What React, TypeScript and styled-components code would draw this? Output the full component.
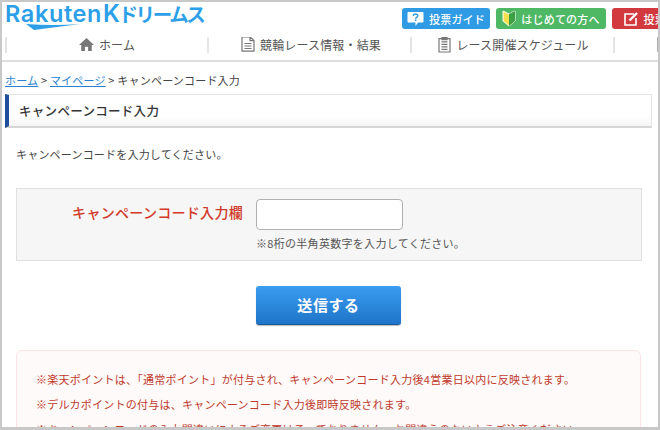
import React from "react";
import styled, { createGlobalStyle } from "styled-components";

const jp = `"Noto Sans CJK JP", "Liberation Sans", sans-serif`;

const Global = createGlobalStyle`
  html, body { margin: 0; padding: 0; background: #fff; overflow: hidden; }
  body { font-family: ${jp}; color: #333; }
`;

const Frame = styled.div`
  width: 660px;
  height: 430px;
  box-sizing: border-box;
  border-top: 2px solid #c8c8c8;
  border-left: 2px solid #c8c8c8;
  border-right: 2px solid #c8c8c8;
  border-bottom: 3px solid #c8c8c8;
  overflow: hidden;
  position: relative;
`;

const Header = styled.header`
  height: 58px;
  border-bottom: 2px solid #dedede;
  display: flex;
  flex-direction: column;
`;

const TopRow = styled.div`
  height: 35px;
  display: flex;
  padding-left: 3px;
`;

const Logo = styled.div`
  position: relative;
  flex: 0 0 397px;
  height: 27px;
  color: #2d9fe8;
  display: flex;
  align-items: baseline;
  white-space: nowrap;
`;

const LogoWord = styled.span`
  font-family: "Inter", "Liberation Sans", sans-serif;
  font-size: 23.5px;
  font-weight: 600;
  letter-spacing: 0.6px;
  line-height: 24px;
`;

const LogoKana = styled.span`
  font-size: 19.5px;
  font-weight: 700;
  letter-spacing: -2.4px;
  line-height: 24px;
`;

const LogoK = styled(LogoWord)`
  margin-left: 1px;
  margin-right: -2px;
  font-size: 24px;
`;

const LogoSwoosh = styled.svg`
  position: absolute;
  left: 21px;
  top: 22px;
`;

const Actions = styled.div`
  display: flex;
  gap: 6px;
  margin-top: 6px;
  height: 21px;
`;

const Action = styled.div<{ $bg: string; $w: number }>`
  flex: 0 0 ${(p) => p.$w}px;
  height: 21px;
  box-sizing: border-box;
  background: ${(p) => p.$bg};
  border-radius: 3px;
  color: #fff;
  font-size: 11px;
  font-weight: 500;
  letter-spacing: 0.2px;
  display: flex;
  align-items: center;
  justify-content: center;
  gap: 5px;
  white-space: nowrap;
`;

const Nav = styled.nav`
  display: flex;
  height: 16px;
  margin-left: 3px;
  overflow: hidden;
`;

const NavItem = styled.div<{ $w: number; $shift?: number }>`
  flex: 0 0 ${(p) => p.$w}px;
  box-sizing: border-box;
  border-left: 2px solid #e4e4e4;
  padding-left: ${(p) => p.$shift ?? 0}px;
  padding-bottom: 2px;
  display: flex;
  align-items: center;
  justify-content: center;
  gap: 5px;
  font-size: 12px;
  color: #555;
  letter-spacing: 0.15px;
  white-space: nowrap;
`;

const Main = styled.main`
  padding: 0 0 0 3px;
  width: 647px;
`;

const Crumbs = styled.div`
  margin-top: 10px;
  font-size: 11px;
  line-height: 16px;
  color: #444;
  white-space: nowrap;
  letter-spacing: 0.2px;
`;

const CrumbLink = styled.a`
  color: #2a7fd0;
  text-decoration: underline;
`;

const Title = styled.h1`
  margin: 6px 0 0;
  height: 34px;
  box-sizing: border-box;
  border-top: 1px solid #e4e4e4;
  border-right: 1px solid #e4e4e4;
  border-bottom: 2px solid #d6d6d6;
  border-left: 4px solid #1f4e9c;
  background: linear-gradient(#fff 70%, #f4f4f4);
  padding-left: 10px;
  font-size: 12.5px;
  font-weight: 500;
  line-height: 31px;
  color: #333;
  letter-spacing: 0.3px;
`;

const Lead = styled.p`
  margin: 18px 0 0 11px;
  font-size: 11px;
  line-height: 16px;
  color: #444;
  letter-spacing: 0.2px;
`;

const FormPanel = styled.section`
  margin: 26px 0 0 11px;
  width: 626px;
  height: 73px;
  box-sizing: border-box;
  background: #f6f6f6;
  border: 1px solid #e0e0e0;
  display: grid;
  grid-template-columns: 226px 1fr;
  column-gap: 13px;
  padding-top: 10px;
`;

const FieldLabel = styled.label`
  text-align: right;
  color: #d2392b;
  font-size: 14px;
  font-weight: 500;
  line-height: 26px;
  letter-spacing: 0.3px;
  white-space: nowrap;
`;

const FieldBox = styled.div`
  display: flex;
  flex-direction: column;
`;

const CodeInput = styled.input`
  width: 147px;
  height: 31px;
  box-sizing: border-box;
  border: 1px solid #b0b0b0;
  border-radius: 4px;
  background: #fff;
  outline: none;
`;

const Hint = styled.div`
  margin-top: 5px;
  font-size: 11px;
  line-height: 16px;
  color: #555;
  letter-spacing: 0.3px;
  white-space: nowrap;
`;

const SubmitRow = styled.div`
  margin-top: 25px;
  padding-left: 251px;
`;

const Submit = styled.button`
  width: 145px;
  height: 39px;
  border: 0;
  border-radius: 3px;
  border-bottom: 1px solid #155a9c;
  background: linear-gradient(#3a9df0, #1f74c8);
  box-shadow: 0 1px 1px #bbb;
  color: #fff;
  font-family: ${jp};
  font-size: 15px;
  font-weight: 700;
  letter-spacing: 0.6px;
  padding: 0 0 2px;
`;

const Notice = styled.section`
  margin: 25px 0 0 11px;
  width: 625px;
  height: 120px;
  box-sizing: border-box;
  background: #fffafa;
  border: 1px solid #fbe4e6;
  border-radius: 6px;
  padding: 19px 0 0 19px;
  color: #c0392b;
  font-size: 11px;
  letter-spacing: 0.25px;
  white-space: nowrap;
`;

const NoticeLine = styled.p`
  margin: 0 0 7px;
  line-height: 18px;
`;

const NavIcon = styled.svg`
  flex: none;
`;

const HomeIcon = () => (
  <NavIcon width="15" height="15" viewBox="0 0 16 16" fill="#777">
    <path d="M8 1 L16 8.5 H13.6 V15 H9.7 V10.5 H6.3 V15 H2.4 V8.5 H0 Z" />
  </NavIcon>
);

const DocIcon = () => (
  <NavIcon width="14" height="16" viewBox="0 0 14 16" fill="none" stroke="#777" strokeWidth="1.2">
    <path d="M1 .8 H9 L13 4.6 V15.2 H1 Z M9 .8 V4.6 H13 M3.5 7.5 H10.5 M3.5 10 H10.5 M3.5 12.5 H10.5" />
  </NavIcon>
);

const ClipIcon = () => (
  <NavIcon width="13" height="17" viewBox="0 0 13 17" fill="none" stroke="#777" strokeWidth="1.2">
    <path d="M1 2.6 H12 V16 H1 Z M3.5 5.8 H9.5 M3.5 8.3 H9.5 M3.5 10.8 H9.5 M3.5 13.3 H9.5" />
    <path d="M4 1 H9 V3.6 H4 Z" fill="#777" />
  </NavIcon>
);

const GuideIcon = () => (
  <svg width="17" height="16" viewBox="0 0 17 16">
    <path d="M1.5 1 H15.5 Q16.5 1 16.5 2 V10.5 Q16.5 11.5 15.5 11.5 H11 L8.5 15 V11.5 H1.5 Q.5 11.5 .5 10.5 V2 Q.5 1 1.5 1 Z" fill="#fff" />
    <path d="M6.2 4.8 Q6.4 2.9 8.5 2.9 Q10.8 2.9 10.8 4.7 Q10.8 5.9 9.5 6.4 Q8.7 6.8 8.7 7.7 M8.7 8.6 V10" fill="none" stroke="#2f9be4" strokeWidth="1.5" />
  </svg>
);

const BeginnerIcon = () => (
  <svg width="14" height="17" viewBox="0 0 14 17">
    <path d="M1 1 L7 4 L13 1 V11 L7 16 L1 11 Z" fill="#f2e14c" stroke="#fff" strokeWidth="1" />
    <path d="M7 4 L13 1 V11 L7 16 Z" fill="#3f9f45" />
  </svg>
);

const EditIcon = () => (
  <svg width="16" height="16" viewBox="0 0 16 16" fill="none" stroke="#fff" strokeWidth="1.6">
    <path d="M11 3 H2 V14 H13 V7" />
    <path d="M6.5 9.5 L14 2" strokeWidth="2.4" />
  </svg>
);

export default function App() {
  return (
    <Frame>
      <Global />
      <Header>
        <TopRow>
          <Logo>
            <LogoWord>Rakuten</LogoWord>
            <LogoK>K</LogoK>
            <LogoKana>ドリームス</LogoKana>
            <LogoSwoosh width="54" height="9" viewBox="0 0 54 9">
              <path d="M0 0 Q28 2 54 0 L8 6 Z" fill="#2d9fe8" />
            </LogoSwoosh>
          </Logo>
          <Actions>
            <Action $bg="#2f9be4" $w={88}><GuideIcon />投票ガイド</Action>
            <Action $bg="#4fb864" $w={110}><BeginnerIcon />はじめての方へ</Action>
            <Action $bg="#d2393f" $w={87}><EditIcon />投票履歴</Action>
          </Actions>
        </TopRow>
        <Nav>
          <NavItem $w={202}><HomeIcon />ホーム</NavItem>
          <NavItem $w={203} $shift={3}><DocIcon />競輪レース情報・結果</NavItem>
          <NavItem $w={203} $shift={2}><ClipIcon />レース開催スケジュール</NavItem>
          <NavItem $w={100}><DocIcon /></NavItem>
        </Nav>
      </Header>
      <Main>
        <Crumbs>
          <CrumbLink>ホーム</CrumbLink> &gt; <CrumbLink>マイページ</CrumbLink> &gt; キャンペーンコード入力
        </Crumbs>
        <Title>キャンペーンコード入力</Title>
        <Lead>キャンペーンコードを入力してください。</Lead>
        <FormPanel>
          <FieldLabel>キャンペーンコード入力欄</FieldLabel>
          <FieldBox>
            <CodeInput aria-label="キャンペーンコード" />
            <Hint>※8桁の半角英数字を入力してください。</Hint>
          </FieldBox>
        </FormPanel>
        <SubmitRow>
          <Submit>送信する</Submit>
        </SubmitRow>
        <Notice>
          <NoticeLine>※楽天ポイントは、「通常ポイント」が付与され、キャンペーンコード入力後4営業日以内に反映されます。</NoticeLine>
          <NoticeLine>※デルカポイントの付与は、キャンペーンコード入力後即時反映されます。</NoticeLine>
          <NoticeLine>※キャンペーンコードの入力間違いによるご変更は承っておりません。お間違えのないようご注意ください。</NoticeLine>
        </Notice>
      </Main>
    </Frame>
  );
}
